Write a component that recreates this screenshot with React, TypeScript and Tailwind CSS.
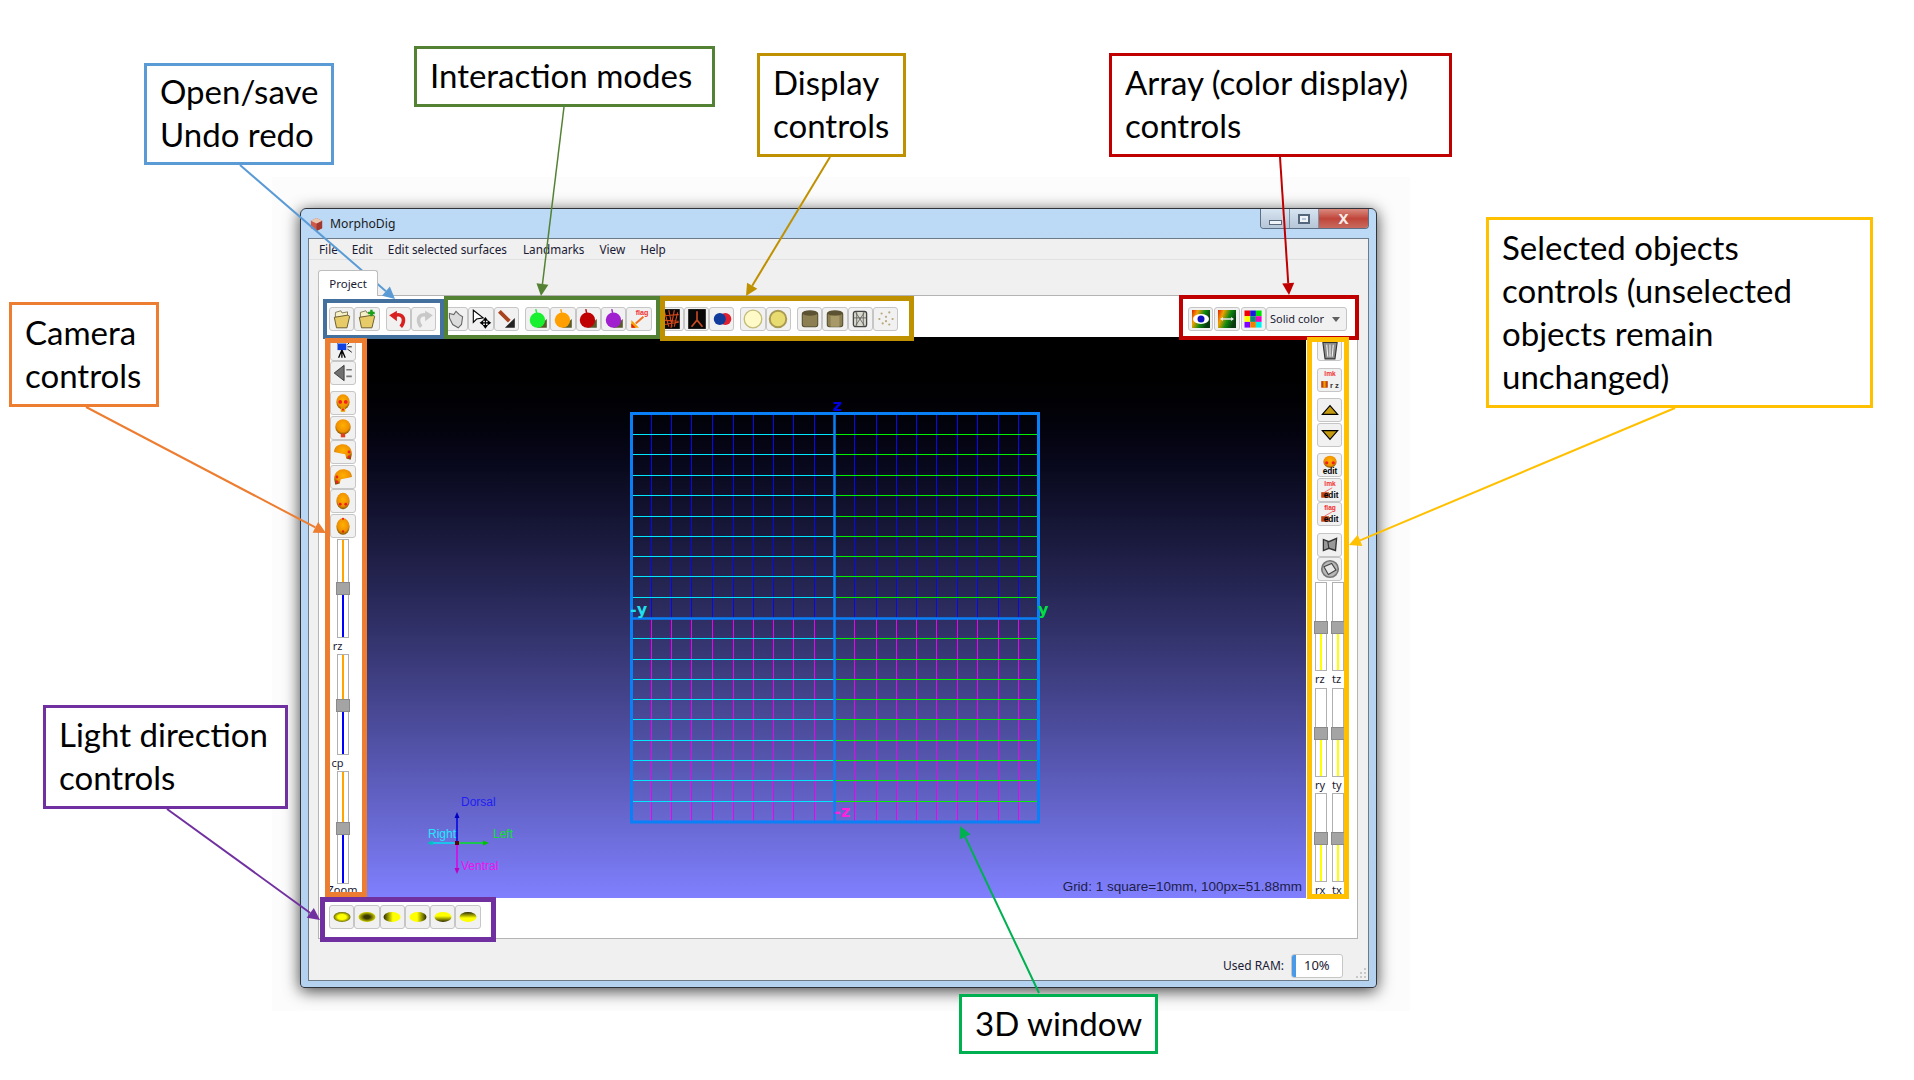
import type { ReactNode } from "react";

const Ic = ({ children, size = 22 }: { children: ReactNode; size?: number }) => (
  <svg viewBox="0 0 20 20" width={size} height={size}>
    {children}
  </svg>
);

function Btn({ children, className = "" }: { children?: ReactNode; className?: string }) {
  return (
    <div
      className={`flex h-[24px] w-[25.3px] shrink-0 items-center justify-center rounded-[3px] border border-[#c6c6c6] bg-[#f1f1f1] ${className}`}
    >
      {children}
    </div>
  );
}

function Defs() {
  return (
    <svg className="absolute h-0 w-0">
      <defs>
        <radialGradient id="head" cx="50%" cy="40%" r="60%">
          <stop offset="0%" stopColor="#ffb000" />
          <stop offset="70%" stopColor="#f09000" />
          <stop offset="100%" stopColor="#7a5200" />
        </radialGradient>
        <linearGradient id="rainbow" x1="0" y1="0" x2="1" y2="0.4">
          <stop offset="0%" stopColor="#e02000" />
          <stop offset="30%" stopColor="#f0a000" />
          <stop offset="65%" stopColor="#108a10" />
          <stop offset="100%" stopColor="#0a3a10" />
        </linearGradient>
        <radialGradient id="l0" cx="50%" cy="50%" r="55%">
          <stop offset="45%" stopColor="#ffff00" />
          <stop offset="100%" stopColor="#4a4a00" />
        </radialGradient>
        <radialGradient id="l1" cx="50%" cy="50%" r="55%">
          <stop offset="30%" stopColor="#3a3a00" />
          <stop offset="100%" stopColor="#e8e800" />
        </radialGradient>
        <linearGradient id="l2" x1="0" y1="0" x2="1" y2="0">
          <stop offset="0%" stopColor="#2a2a00" />
          <stop offset="55%" stopColor="#ffff00" />
        </linearGradient>
        <linearGradient id="l3" x1="1" y1="0" x2="0" y2="0">
          <stop offset="0%" stopColor="#2a2a00" />
          <stop offset="55%" stopColor="#ffff00" />
        </linearGradient>
        <linearGradient id="l4" x1="0" y1="1" x2="0" y2="0">
          <stop offset="0%" stopColor="#2a2a00" />
          <stop offset="60%" stopColor="#ffff00" />
        </linearGradient>
        <linearGradient id="l5" x1="0" y1="0" x2="0" y2="1">
          <stop offset="0%" stopColor="#2a2a00" />
          <stop offset="60%" stopColor="#ffff00" />
        </linearGradient>
      </defs>
    </svg>
  );
}

const Folder = ({ plus }: { plus?: boolean }) => (
  <Ic>
    <path d="M4 4l5-1.5 1 2 5-1v5H4z" fill="#f6f0c8" stroke="#777048" strokeWidth="0.8" />
    <path d="M3 8.5l12-2 2 1-2.500 10.500H5z" fill="#e6cb68" stroke="#6b6030" strokeWidth="0.9" />
    {plus && <path d="M14 1.5v6M11 4.5h6" stroke="#18a018" strokeWidth="2.2" />}
  </Ic>
);

const Curl = ({ color, flip }: { color: string; flip?: boolean }) => (
  <Ic>
    <g transform={flip ? "translate(20 0) scale(-1 1)" : undefined}>
      <path d="M6 7.5c4-2.5 9-1.5 9 3.5 0 2.500-1 4.500-2.500 6" fill="none" stroke={color} strokeWidth="3.2" />
      <polygon points="2,6.500 9,2.500 9,12" fill={color} />
    </g>
  </Ic>
);

const Dome = ({ color }: { color: string }) => (
  <Ic>
    <polygon points="9,18 18,18 18,10" fill="#5a5a2a" />
    <circle cx="9.500" cy="11" r="7" fill={color} />
    <path d="M8 1l.7 3.500" stroke={color} strokeWidth="1.300" />
  </Ic>
);

const Flag = ({ label }: { label: string }) => (
  <Ic>
    <text x="7" y="6.500" fontSize="6.500" fontWeight="700" fill="#f03030" fontFamily="'Liberation Sans',sans-serif">
      {label}
    </text>
    <path d="M14 8L7 14" stroke="#f07020" strokeWidth="1.800" />
    <polygon points="3,18 10,18 3,11" fill="#f8a000" />
    <polygon points="3,18 7,18 3,14" fill="#e02000" />
  </Ic>
);

const Wire = () => (
  <Ic>
    <rect x="2" y="1" width="16" height="18" fill="#080808" />
    <path
      d="M4 3l4 14M8 2l3 15M13 2l-3 16M16 4l-3 13M3 7l14-1M3 11l14 1M4 15l13-2"
      stroke="#d8481a"
      strokeWidth="1"
      fill="none"
    />
  </Ic>
);

const Cyl = ({ inner }: { inner?: boolean }) => (
  <Ic>
    <rect x="3" y="4" width="14" height="13" rx="2" fill="#8c7f52" stroke="#55502f" />
    <ellipse cx="10" cy="4.500" rx="7" ry="2.500" fill="#5a5232" />
    {inner && <rect x="6" y="7" width="8" height="10" fill="#a89a68" />}
  </Ic>
);

const Head = ({ v }: { v: number }) => (
  <Ic>
    {v === 0 && (
      <>
        <ellipse cx="10" cy="9" rx="6" ry="7" fill="url(#head)" />
        <rect x="8" y="14" width="4" height="4" fill="#e8a000" />
        <circle cx="7.500" cy="9" r="1.700" fill="#f02020" />
        <circle cx="12.500" cy="9" r="1.700" fill="#f02020" />
        <circle cx="10" cy="16" r="1" fill="#f02020" />
      </>
    )}
    {v === 1 && (
      <>
        <circle cx="10" cy="9" r="7" fill="url(#head)" />
        <rect x="8" y="15" width="4" height="3.500" fill="#e04020" />
      </>
    )}
    {v === 2 && (
      <>
        <path d="M2 10c0-5 4-7 8-7s8 3 8 9l-1 5-4-1-1-4-6-1z" fill="url(#head)" />
        <circle cx="15.500" cy="10" r="1.300" fill="#f02020" />
        <circle cx="15.500" cy="14.500" r="1.300" fill="#f02020" />
      </>
    )}
    {v === 3 && (
      <>
        <path d="M18 10c0-5-4-7-8-7S2 6 2 12l1 5 4-1 1-4 6-1z" fill="url(#head)" />
        <circle cx="4.500" cy="10" r="1.300" fill="#f02020" />
        <circle cx="4.500" cy="14.500" r="1.300" fill="#f02020" />
      </>
    )}
    {v === 4 && (
      <>
        <ellipse cx="10" cy="10" rx="6" ry="7.500" fill="url(#head)" />
        <circle cx="7.500" cy="13" r="1.300" fill="#f02020" />
        <circle cx="12.500" cy="13" r="1.300" fill="#f02020" />
      </>
    )}
    {v === 5 && (
      <>
        <ellipse cx="10" cy="10.500" rx="6" ry="7.500" fill="url(#head)" />
        <circle cx="10" cy="3.500" r="1" fill="#f02020" />
        <circle cx="10" cy="15" r="1.200" fill="#d03010" />
      </>
    )}
  </Ic>
);

const Edit = ({ label }: { label: string }) => (
  <Ic>
    <text x="10" y="6.500" fontSize="6" fill="#f03030" fontWeight="700" textAnchor="middle" fontFamily="'Liberation Sans',sans-serif">
      {label}
    </text>
    <path d="M5 12l7-4" stroke="#f06060" strokeWidth="0.8" />
    <rect x="2" y="12" width="7" height="5" fill="#c04010" />
    <text x="11" y="17" fontSize="7.500" fontWeight="700" textAnchor="middle" fill="#000" fontFamily="'Liberation Sans',sans-serif">
      edit
    </text>
  </Ic>
);

function Slider({ h, top, up, down }: { h: string; top: string; up: string; down: string }) {
  return (
    <div className={`flex w-[12px] shrink-0 flex-col border border-[#b0b0b0] bg-white ${h}`}>
      <div className={`flex justify-center ${top}`}>
        <div className={`h-full w-[2px] ${up}`} />
      </div>
      <div className="-mx-[2px] h-[13px] shrink-0 border border-[#8a8a8a] bg-[#a4a4a4]" />
      <div className="flex flex-1 justify-center">
        <div className={`h-full w-[2px] ${down}`} />
      </div>
    </div>
  );
}

function LeftRail() {
  return (
    <div className="flex w-[48px] shrink-0 flex-col items-center">
      <Btn>
        <Ic>
          <rect x="5" y="5" width="8" height="6" fill="#1040e0" />
          <path d="M9 11l-3 7M9 11l3 7M9 11v7" stroke="#000" strokeWidth="1.200" />
          <path d="M14 6l4-4M14 8h4M14 10l4 3M3 3l2 2" stroke="#222" strokeWidth="0.900" />
        </Ic>
      </Btn>
      <Btn>
        <Ic>
          <polygon points="2,10 11,3 11,17" fill="#707070" stroke="#333" strokeWidth="0.800" />
          <path d="M13 7h5M13 13h5" stroke="#777" strokeWidth="1.500" />
        </Ic>
      </Btn>
      <div className="mt-[6px] flex flex-col gap-[0.5px]">
        {[0, 1, 2, 3, 4, 5].map((v) => (
          <Btn key={v}>
            <Head v={v} />
          </Btn>
        ))}
      </div>
      <div className="mt-px flex flex-col items-center">
        <Slider h="h-[99px]" top="h-[42px]" up="bg-[#ffa500]" down="bg-[#0000ff]" />
        <span className="-ml-[11px] h-[16px] text-[11px] leading-[16px] text-[#1a1a33]">rz</span>
        <Slider h="h-[101px]" top="h-[44px]" up="bg-[#ffa500]" down="bg-[#0000ff]" />
        <span className="-ml-[11px] h-[16px] text-[11px] leading-[16px] text-[#1a1a33]">cp</span>
        <Slider h="h-[113px]" top="h-[50px]" up="bg-[#ffa500]" down="bg-[#0000ff]" />
        <span className="-ml-[1px] h-[13px] text-[11px] leading-[11px] text-[#1a1a33]">Zoom</span>
      </div>
    </div>
  );
}

function RightRail() {
  return (
    <div className="flex w-[51px] shrink-0 flex-col items-stretch">
      <div className="ml-[11px] flex flex-col">
        <Btn>
          <Ic>
            <path d="M3.500 4h13l-2 15h-9z" fill="#8a8a8a" stroke="#333" strokeWidth="1" />
            <path d="M7 6l1 11M10 6v11M13 6l-1 11" stroke="#eee" strokeWidth="1" />
          </Ic>
        </Btn>
        <Btn className="mt-[7px]">
          <Ic>
            <text x="10" y="6.500" fontSize="6" fill="#f03030" fontWeight="700" textAnchor="middle" fontFamily="'Liberation Sans',sans-serif">
              lmk
            </text>
            <rect x="2" y="11" width="6" height="6" fill="#c04010" />
            <rect x="4" y="11" width="2" height="6" fill="#f0a000" />
            <text x="14" y="17" fontSize="7" fontWeight="700" textAnchor="middle" fill="#333" fontFamily="'Liberation Sans',sans-serif">
              r z
            </text>
          </Ic>
        </Btn>
        <Btn className="mt-[6px]">
          <Ic>
            <polygon points="3,14 10,6 17,14" fill="#c49a10" stroke="#000" strokeWidth="1" />
          </Ic>
        </Btn>
        <Btn className="mt-px">
          <Ic>
            <polygon points="3,6 10,14 17,6" fill="#c49a10" stroke="#000" strokeWidth="1" />
          </Ic>
        </Btn>
        <Btn className="mt-[6px]">
          <Ic>
            <ellipse cx="10" cy="7" rx="6" ry="5.500" fill="url(#head)" />
            <circle cx="7" cy="8" r="1.500" fill="#f02020" />
            <circle cx="13" cy="8" r="1.500" fill="#f02020" />
            <text x="10" y="18" fontSize="7.500" fontWeight="700" textAnchor="middle" fill="#000" fontFamily="'Liberation Sans',sans-serif">
              edit
            </text>
          </Ic>
        </Btn>
        <Btn className="mt-px">
          <Edit label="lmk" />
        </Btn>
        <Btn>
          <Edit label="flag" />
        </Btn>
        <Btn className="mt-[7px]">
          <Ic>
            <path d="M4 5l5 2 7-3-1 11-6-2-5 2z" fill="#999" stroke="#333" strokeWidth="1.200" />
            <path d="M8 7l1 6" stroke="#333" strokeWidth="1" />
          </Ic>
        </Btn>
        <Btn>
          <Ic>
            <circle cx="10" cy="10" r="7.500" fill="#b8b8b8" stroke="#777" strokeWidth="1.500" />
            <path d="M4.500 8l7-3 4 6-7 4z" fill="#e8e8e8" stroke="#444" strokeWidth="1" />
          </Ic>
        </Btn>
      </div>
      <div className="mt-[1px] ml-[9px] grid w-[29px] grid-cols-[12px_12px] gap-x-[5px]">
        {[
          ["rz", "tz"],
          ["ry", "ty"],
          ["rx", "tx"],
        ].map((row) =>
          row.map((name) => (
            <div key={name} className="flex flex-col">
              <Slider h="h-[89px]" top="h-[38px]" up="bg-white" down="bg-[#ffff00]" />
              <span className="h-[16.500px] text-[11px] leading-[15px] text-[#1a1a33]">{name}</span>
            </div>
          )),
        )}
      </div>
    </div>
  );
}

function Toolbar() {
  return (
    <div className="flex h-[41px] shrink-0 items-start pt-[11px] pr-[10px] pl-[10px]">
      <Btn><Folder /></Btn>
      <Btn><Folder plus /></Btn>
      <Btn className="ml-[6px]"><Curl color="#d82020" /></Btn>
      <Btn><Curl color="#c8c8c8" flip /></Btn>

      <Btn className="ml-[7px]">
        <Ic>
          <path d="M4 5l4 1 2-3 3 3 3 2-1 7-3 3-5-3-3-6z" fill="#dcdcdc" stroke="#666" strokeWidth="1" />
        </Ic>
      </Btn>
      <Btn>
        <Ic>
          <polygon points="3,2 3,13 6,10 12,9" fill="#fff" stroke="#000" strokeWidth="1" />
          <path d="M14 9v9M9.500 13.500h9M14 9l-1.500 2h3zM14 18l-1.500-2h3zM9.500 13.500l2-1.500v3zM18.500 13.500l-2-1.500v3z" stroke="#000" strokeWidth="1" />
        </Ic>
      </Btn>
      <Btn>
        <Ic>
          <path d="M4 3l9 9" stroke="#a8431f" strokeWidth="3.500" />
          <polygon points="9,18 18,18 18,9" fill="#222" />
        </Ic>
      </Btn>

      <Btn className="ml-[6px]"><Dome color="#18f030" /></Btn>
      <Btn><Dome color="#ffa000" /></Btn>
      <Btn><Dome color="#c00000" /></Btn>
      <Btn><Dome color="#a020d0" /></Btn>
      <Btn className="bg-[#e0e0e0]"><Flag label="flag" /></Btn>

      <Btn className="ml-[7px]"><Wire /></Btn>
      <Btn>
        <Ic>
          <rect x="2" y="1" width="16" height="18" fill="#080808" />
          <path d="M10 3v8M10 11l-5 6M10 11l5 6" stroke="#c84a20" strokeWidth="1.500" fill="none" />
        </Ic>
      </Btn>
      <Btn>
        <Ic>
          <circle cx="13" cy="10" r="5.500" fill="#e02030" />
          <circle cx="8" cy="10" r="5.500" fill="#123c9c" />
        </Ic>
      </Btn>

      <Btn className="ml-[6px]">
        <Ic>
          <circle cx="10" cy="10" r="8" fill="#fffac8" stroke="#c4bc78" strokeWidth="1.200" />
        </Ic>
      </Btn>
      <Btn>
        <Ic>
          <circle cx="10" cy="10" r="7.500" fill="#e8dc70" stroke="#a89a50" strokeWidth="1.800" />
        </Ic>
      </Btn>

      <Btn className="ml-[6px]"><Cyl /></Btn>
      <Btn className="bg-[#e2e2e2]"><Cyl inner /></Btn>
      <Btn>
        <Ic>
          <rect x="4" y="3" width="12" height="14" rx="2" fill="#d8d8cc" stroke="#444" strokeWidth="1.200" />
          <path d="M6 4l8 12M14 4L6 16M4 9h12M7 3v14M13 3v14" stroke="#555" strokeWidth="0.700" />
        </Ic>
      </Btn>
      <Btn>
        <Ic>
          {[[6, 5], [13, 4], [4, 10], [10, 8], [16, 10], [7, 14], [13, 15], [10, 12]].map(([x, y]) => (
            <circle key={`${x}-${y}`} cx={x} cy={y} r="1" fill="#b8a878" />
          ))}
        </Ic>
      </Btn>

      <div className="ml-auto flex items-start gap-[1px]">
        <Btn className="w-[24px] bg-[#dedede]">
          <Ic size={20}>
            <rect x="1" y="1" width="18" height="18" fill="url(#rainbow)" />
            <ellipse cx="10" cy="10" rx="8" ry="5" fill="#fff" />
            <circle cx="10" cy="10" r="3.500" fill="#1010c0" />
          </Ic>
        </Btn>
        <Btn className="w-[24px] bg-[#e6e6e6]">
          <Ic size={20}>
            <rect x="1" y="1" width="18" height="18" fill="url(#rainbow)" />
            <path d="M4 10h12" stroke="#e8e8e8" strokeWidth="1.500" />
            <polygon points="3,10 6,8 6,12" fill="#e8e8e8" />
            <polygon points="17,10 14,8 14,12" fill="#e8e8e8" />
          </Ic>
        </Btn>
        <Btn className="w-[24px]">
          <Ic size={20}>
            {["#f00000", "#1818e0", "#00e000", "#ffff00", "#0a8a7a", "#f000c0", "#8000ff", "#f08000", "#00f0f0"].map((c, i) => (
              <rect key={c} x={1.500 + (i % 3) * 5.700} y={1.500 + Math.floor(i / 3) * 5.700} width="5.700" height="5.700" fill={c} />
            ))}
          </Ic>
        </Btn>
        <div className="-ml-px flex h-[24px] w-[81px] items-center justify-between rounded-[3px] border border-[#c6c6c6] bg-[#f1f1f1] pr-[6px] pl-[3px] text-[11px] text-[#1a1a33]">
          Solid color
          <span className="h-0 w-0 border-x-[4px] border-t-[5px] border-x-transparent border-t-[#606060]" />
        </div>
      </div>
    </div>
  );
}

const gridX = [651, 671, 691, 712, 733, 753, 773, 793, 814, 854, 876, 896, 916, 936, 957, 977, 998, 1018];
const gridY = [434, 454, 475, 495, 516, 536, 556, 576, 597, 638, 659, 679, 699, 719, 740, 760, 780, 801];

function Viewport() {
  return (
    <div className="relative flex-1 bg-gradient-to-b from-black to-[#8080ff]">
      <svg className="absolute inset-0" viewBox="367 337 939 561" width="939" height="561">
        {gridX.map((x) => (
          <g key={x}>
            <line x1={x + 0.5} y1="414" x2={x + 0.5} y2="618" stroke="#0808f0" strokeWidth="1" />
            <line x1={x + 0.5} y1="618" x2={x + 0.5} y2="821" stroke="#f000f0" strokeWidth="1" />
          </g>
        ))}
        {gridY.map((y) => (
          <g key={y}>
            <line x1="631" y1={y + 0.5} x2="834" y2={y + 0.5} stroke="#00e8ff" strokeWidth="1" />
            <line x1="834" y1={y + 0.5} x2="1038" y2={y + 0.5} stroke="#00f000" strokeWidth="1" />
          </g>
        ))}
        <rect x="631.500" y="413.500" width="407" height="408.500" fill="none" stroke="#0a80f8" strokeWidth="3" />
        <path d="M834.500 414v408M631 618.500h407" stroke="#0a80f8" strokeWidth="2.500" />
        <g fontFamily="'DejaVu Sans',sans-serif" fontWeight="700" fontSize="16">
          <text x="833" y="411" fill="#0000e0">z</text>
          <text x="630" y="615" fill="#20e0f0">-y</text>
          <text x="1038" y="615" fill="#00e040">y</text>
          <text x="834" y="817" fill="#ff20e0">-z</text>
        </g>

        <path d="M457 843V816" stroke="#0000e0" strokeWidth="1.500" />
        <polygon points="457,812 454.500,818 459.500,818" fill="#0000c0" />
        <path d="M457 843v27" stroke="#e000e0" strokeWidth="1.500" />
        <polygon points="457,874 454.500,868 459.500,868" fill="#c000c0" />
        <path d="M457 843h-26" stroke="#00e0f0" strokeWidth="1.500" />
        <polygon points="427,843 433,840.500 433,845.500" fill="#00c0c0" />
        <path d="M457 843h28" stroke="#00e020" strokeWidth="1.500" />
        <polygon points="489,843 483,840.500 483,845.500" fill="#00c000" />
        <rect x="455" y="841" width="4" height="4" fill="#600010" />
        <g fontFamily="'Liberation Sans',sans-serif" fontSize="12">
          <text x="461" y="806" fill="#2020f0">Dorsal</text>
          <text x="428" y="838" fill="#20e8ff">Right</text>
          <text x="493" y="838" fill="#10e030">Left</text>
          <text x="461" y="870" fill="#f010f0">Ventral</text>
        </g>
      </svg>
      <span className="absolute right-[4px] bottom-[3px] font-['Liberation_Sans',sans-serif] text-[13.500px] leading-[16px] text-[#20204a]">
        Grid: 1 square=10mm, 100px=51.88mm
      </span>
    </div>
  );
}

function AppWindow() {
  return (
    <div className="absolute top-[208px] left-[300px] flex h-[780px] w-[1077px] flex-col rounded-t-[6px] rounded-b-[4px] border border-[#30343a] bg-gradient-to-b from-[#bcd9f6] to-[#b4d2f0] font-['Noto_Sans',sans-serif] shadow-[0_3px_16px_rgba(0,0,0,0.75)]">
      <div className="flex h-[29px] shrink-0 items-start pl-[8px] text-[12.200px] text-[#1a1a1a]">
        <div className="mt-[6px] flex items-center gap-[6px] leading-[18px]">
          <svg viewBox="0 0 16 16" width="15" height="15">
            <polygon points="2,4 8,1 14,4 14,12 8,15 2,12" fill="#d05a4a" />
            <polygon points="8,7 14,4 14,12 8,15" fill="#a03a30" />
            <polygon points="2,4 8,1 14,4 8,7" fill="#e8c8b0" />
          </svg>
          MorphoDig
        </div>
        <div className="mr-[7px] ml-auto flex h-[20px] items-stretch overflow-hidden rounded-b-[4px] border border-t-0 border-[#5c6f84]">
          <div className="flex w-[29px] items-end justify-center border-r border-[#7f93a8] bg-gradient-to-b from-[#d8e4f0] to-[#b5c6d8] pb-[3px]">
            <div className="h-[5px] w-[13px] border border-[#5a6a7a] bg-[#f0f4f8]" />
          </div>
          <div className="flex w-[29px] items-center justify-center border-r border-[#7f93a8] bg-gradient-to-b from-[#d8e4f0] to-[#b5c6d8]">
            <div className="flex h-[10px] w-[12px] items-center justify-center border-2 border-[#55677a] bg-[#f0f4f8]">
              <div className="h-[2px] w-[4px] bg-[#b5c6d8]" />
            </div>
          </div>
          <div className="flex w-[49px] items-center justify-center bg-gradient-to-b from-[#d98a80] via-[#c0453a] to-[#c86a5e] text-[15px] leading-none font-bold text-[#f4ecea]">
            X
          </div>
        </div>
      </div>

      <div className="relative mx-[7px] mb-[6px] flex flex-1 flex-col border border-[#6d7a88] bg-[#f0f0f0]">
        <div className="flex h-[21px] shrink-0 items-center border-b border-[#e2e2e2] pt-[2px] pl-[10px] text-[11.750px] text-[#1a1a33]">
          <span>File</span>
          <span className="ml-[14px]">Edit</span>
          <span className="ml-[15px]">Edit selected surfaces</span>
          <span className="ml-[16px]">Landmarks</span>
          <span className="ml-[15px]">View</span>
          <span className="ml-[15px]">Help</span>
        </div>
        <div className="flex h-[35px] shrink-0 items-end pl-[9px]">
          <div className="-mb-px z-10 flex h-[26px] w-[60px] items-center justify-center rounded-t-[3px] border border-b-0 border-[#bdbdbd] bg-white text-[11.500px] text-[#1a1a33]">
            Project
          </div>
        </div>
        <div className="mr-[10px] ml-[9px] flex h-[644px] shrink-0 flex-col border border-[#b4b4b4] bg-white">
          <Toolbar />
          <div className="flex h-[561px] shrink-0">
            <LeftRail />
            <Viewport />
            <RightRail />
          </div>
          <div className="flex flex-1 items-start pt-[7px] pl-[10px]">
            {["l0", "l1", "l2", "l3", "l4", "l5"].map((id) => (
              <Btn key={id}>
                <svg viewBox="0 0 20 20" width="20" height="20">
                  <ellipse cx="10" cy="10" rx="8.500" ry="5" fill={`url(#${id})`} />
                </svg>
              </Btn>
            ))}
          </div>
        </div>
        <div className="flex flex-1 items-start justify-end pt-[15px] pr-[25px] text-[12px] text-[#1a1a33]">
          <span className="mr-[7px] leading-[24px]">Used RAM:</span>
          <div className="flex h-[24px] w-[52px] items-center overflow-hidden rounded-[3px] border border-[#c6c6c6] bg-white">
            <div className="h-full w-[4px] bg-[#4a9ae8]" />
            <span className="ml-[8px] text-[13px]">10%</span>
          </div>
        </div>
        <svg className="absolute right-[2px] bottom-[2px]" width="12" height="12" viewBox="0 0 12 12">
          {[[10, 2], [10, 6], [6, 6], [10, 10], [6, 10], [2, 10]].map(([x, y]) => (
            <rect key={`${x}-${y}`} x={x} y={y} width="2" height="2" fill="#c8c8c8" />
          ))}
        </svg>
      </div>
    </div>
  );
}

const labels = [
  { lines: ["Open/save", "Undo redo"], box: "left-[144px] top-[63px] h-[102px] w-[190px] border-[#5b9bd5]" },
  { lines: ["Interaction modes"], box: "left-[414px] top-[46px] h-[61px] w-[301px] border-[#548235]" },
  { lines: ["Display", "controls"], box: "left-[757px] top-[53px] h-[104px] w-[149px] border-[#bf9000]" },
  { lines: ["Array (color display)", "controls"], box: "left-[1109px] top-[53px] h-[104px] w-[343px] border-[#c00000]" },
  { lines: ["Camera", "controls"], box: "left-[9px] top-[302px] h-[105px] w-[150px] border-[#ed7d31]" },
  {
    lines: ["Selected objects", "controls (unselected", "objects remain", "unchanged)"],
    box: "left-[1486px] top-[217px] h-[191px] w-[387px] border-[#ffc000]",
  },
  { lines: ["Light direction", "controls"], box: "left-[43px] top-[705px] h-[104px] w-[245px] border-[#7030a0]" },
  { lines: ["3D window"], box: "left-[959px] top-[994px] h-[60px] w-[199px] border-[#00b050]" },
];

const frames = [
  "left-[323px] top-[299px] h-[40px] w-[121px] border-[4px] border-[#44709d]",
  "left-[444px] top-[296px] h-[43px] w-[216px] border-[4px] border-[#548235]",
  "left-[660px] top-[296px] h-[45px] w-[254px] border-[5px] border-[#bf9000]",
  "left-[1179px] top-[295px] h-[45px] w-[180px] border-[4px] border-[#c00000]",
  "left-[325px] top-[338px] h-[559px] w-[42px] border-[5px] border-[#ed7d31]",
  "left-[1307px] top-[337px] h-[562px] w-[42px] border-[5px] border-[#ffc000]",
  "left-[320px] top-[897px] h-[45px] w-[176px] border-[5px] border-[#7030a0]",
];

const arrows = [
  { a: [240, 165], b: [395, 299], c: "#5b9bd5", w: 2 },
  { a: [564, 107], b: [541, 296], c: "#548235", w: 1.5 },
  { a: [830, 157], b: [746, 296], c: "#bf9000", w: 2 },
  { a: [1280, 157], b: [1289, 295], c: "#c00000", w: 2 },
  { a: [86, 407], b: [326, 533], c: "#ed7d31", w: 2 },
  { a: [1675, 408], b: [1349, 545], c: "#ffc000", w: 2 },
  { a: [167, 809], b: [320, 920], c: "#7030a0", w: 2 },
  { a: [1039, 993], b: [960, 826], c: "#00b050", w: 2 },
];

function Arrows() {
  return (
    <svg className="pointer-events-none absolute inset-0" width="1914" height="1080" viewBox="0 0 1914 1080">
      {arrows.map(({ a, b, c, w }) => {
        const dx = b[0] - a[0];
        const dy = b[1] - a[1];
        const len = Math.hypot(dx, dy);
        const ux = dx / len;
        const uy = dy / len;
        const bx = b[0] - ux * 12;
        const by = b[1] - uy * 12;
        const pts = `${b[0]},${b[1]} ${bx - uy * 6},${by + ux * 6} ${bx + uy * 6},${by - ux * 6}`;
        return (
          <g key={c + a[0]}>
            <line x1={a[0]} y1={a[1]} x2={bx} y2={by} stroke={c} strokeWidth={w} />
            <polygon points={pts} fill={c} />
          </g>
        );
      })}
    </svg>
  );
}

export default function App() {
  return (
    <div className="relative h-[1080px] w-[1914px] overflow-hidden bg-white">
      <Defs />
      <div className="absolute top-[177px] left-[272px] h-[834px] w-[1138px] bg-[#fcfcfc]" />
      <AppWindow />
      {frames.map((f) => (
        <div key={f} className={`pointer-events-none absolute ${f}`} />
      ))}
      <Arrows />
      {labels.map((l) => (
        <div
          key={l.lines[0]}
          className={`absolute flex flex-col justify-center border-[3px] bg-white pb-[2px] pl-[13px] font-['Lato',sans-serif] text-[33px] leading-[43px] text-black ${l.box}`}
        >
          {l.lines.map((t) => (
            <span key={t} className="whitespace-nowrap">
              {t}
            </span>
          ))}
        </div>
      ))}
    </div>
  );
}
